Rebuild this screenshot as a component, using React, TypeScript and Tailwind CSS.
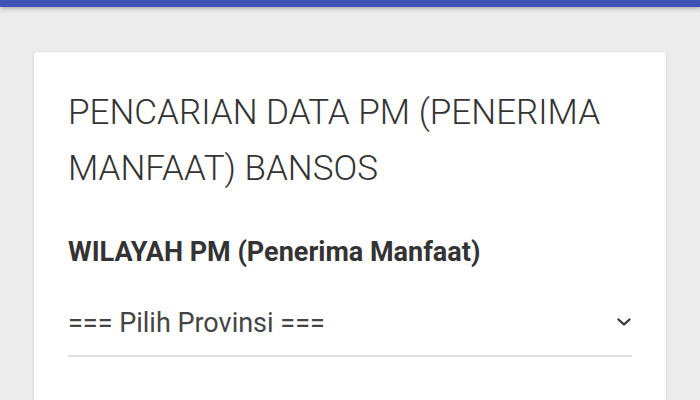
export default function App() {
  return (
    <div
      className="h-screen w-full bg-[#ececec] overflow-hidden"
      style={{ fontFamily: 'Roboto, "Noto Sans", sans-serif' }}
    >
      {/* Top bar */}
      <div className="h-[7px] w-full bg-[#3f51b5] shadow-[0_2px_4px_rgba(0,0,0,0.25)]" />

      <div className="px-[34px] pt-[45px]">
        <div className="bg-white rounded-[4px] shadow-[0_1px_3px_rgba(0,0,0,0.15)] px-[34px] pt-[33px] pb-16">
          <h1 className="text-[35px] leading-[56px] font-light text-[#333]">
            PENCARIAN DATA PM (PENERIMA MANFAAT) BANSOS
          </h1>

          <div className="mt-[39px] text-[27px] leading-[32px] font-bold text-[#333]">
            WILAYAH PM (Penerima Manfaat)
          </div>

          <div className="mt-[39px] flex items-center justify-between border-b-2 border-[#dedede] pb-[16px]">
            <span className="text-[27px] leading-[32px] font-normal text-[#444]">
              === Pilih Provinsi ===
            </span>
            <svg width="14" height="8" viewBox="0 0 14 8" className="mr-[1px] mt-[-3px]">
              <polyline
                points="1.5,1.5 7,6.5 12.5,1.5"
                fill="none"
                stroke="#333"
                strokeWidth="2.2"
                strokeLinecap="round"
                strokeLinejoin="round"
              />
            </svg>
          </div>
        </div>
      </div>
    </div>
  );
}
